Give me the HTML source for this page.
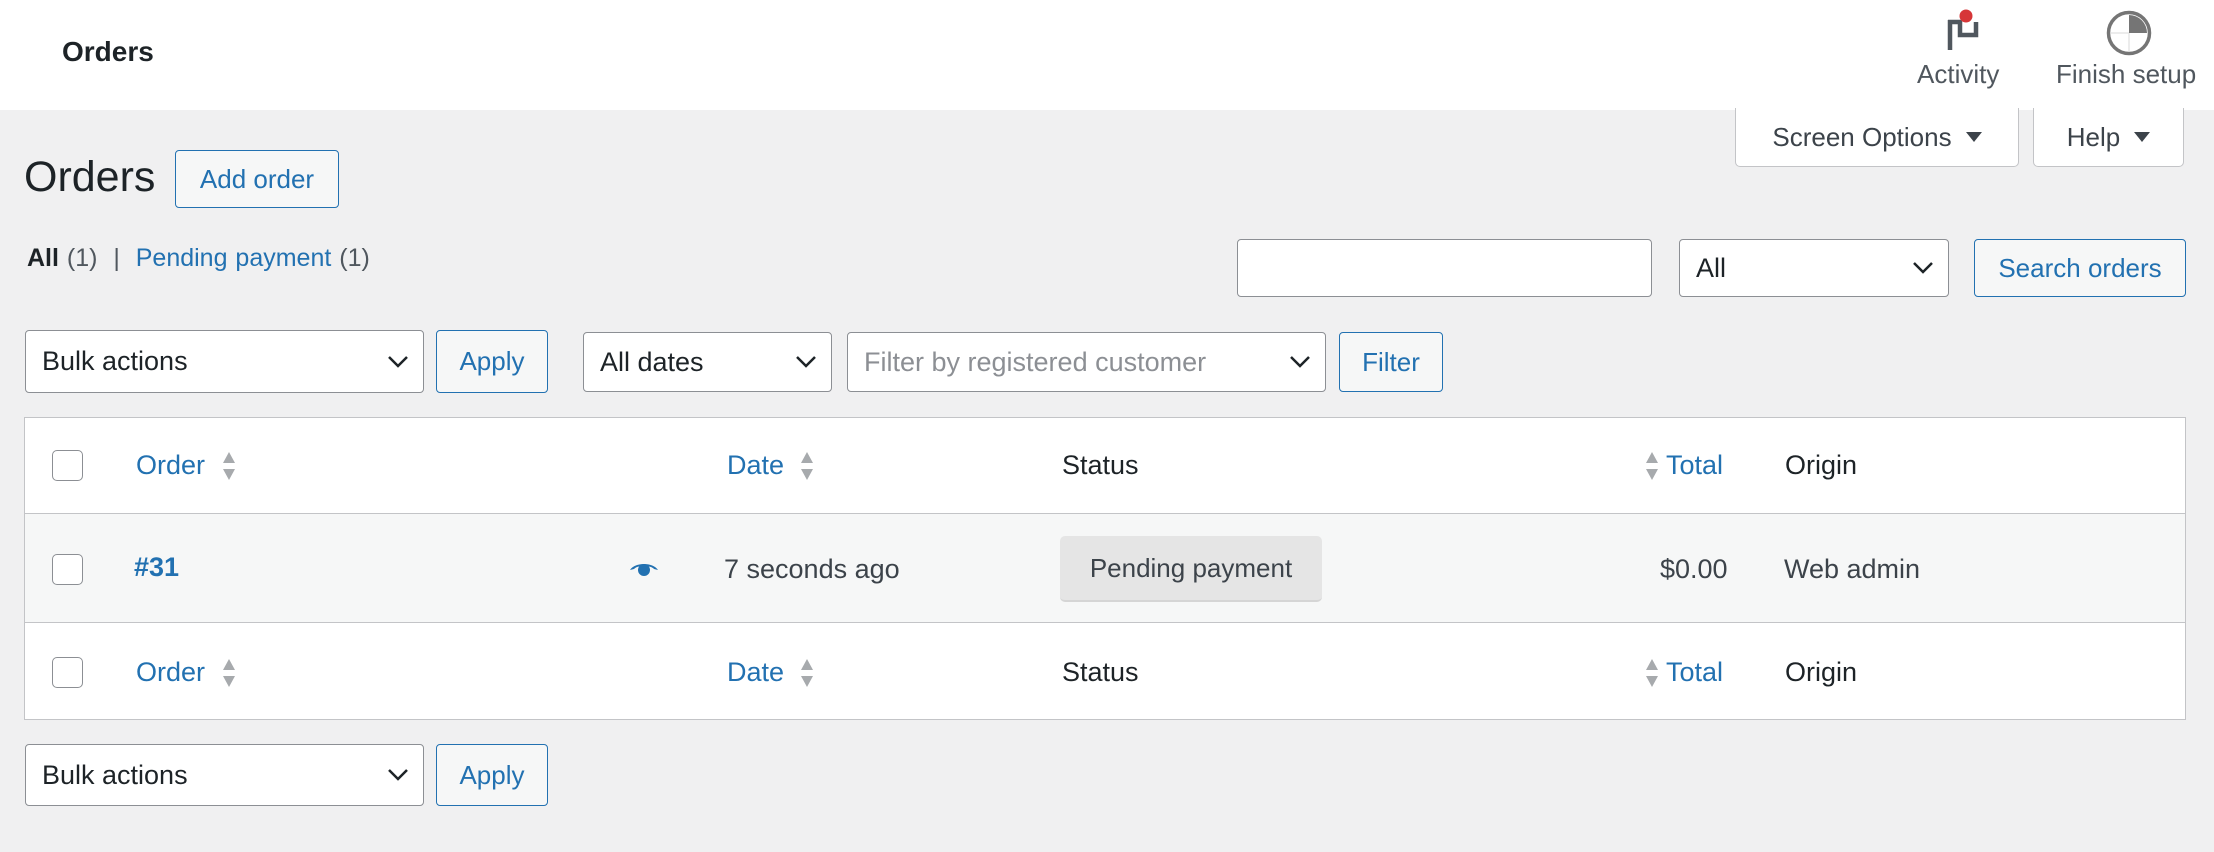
<!DOCTYPE html>
<html><head><meta charset="utf-8"><style>
*{box-sizing:border-box;margin:0;padding:0}
body{width:2214px;height:852px;background:#f0f0f1;font-family:"Liberation Sans",Arial,sans-serif;color:#1d2327;position:relative;overflow:hidden}
.a{position:absolute}
.top{left:0;top:0;width:2214px;height:110px;background:#fff}
.btn{position:absolute;border:1.5px solid #2271b1;border-radius:4px;background:#f6f7f7;color:#2271b1;font-size:26px;display:flex;align-items:center;justify-content:center}
.sel{position:absolute;border:1.5px solid #8c8f94;border-radius:4px;background:#fff;font-size:27px;display:flex;align-items:center;padding-left:16px;color:#1d2327}
.sel svg{position:absolute;right:14px;top:50%;margin-top:-7px}
.tab{position:absolute;top:108px;height:59px;background:#fff;border:1.5px solid #c3c4c7;border-top:none;border-radius:0 0 5px 5px;font-size:26px;color:#3c434a;display:flex;align-items:center;justify-content:center}
.tri{display:inline-block;width:0;height:0;border-left:8px solid transparent;border-right:8px solid transparent;border-top:10px solid #3c434a;margin-left:14px}
.cb{position:absolute;left:52px;width:31px;height:31px;border:1.5px solid #8c8f94;border-radius:5px;background:#fff}
.t{position:absolute;font-size:27px}
.lnk{color:#2271b1}
.arr{position:absolute;width:14px;height:30px}
</style></head><body>
<div class="a top"></div>
<div class="a" style="left:62px;top:36px;font-size:28px;font-weight:bold">Orders</div>
<svg class="a" style="left:1940px;top:6px" width="44" height="46" viewBox="0 0 44 46"><path d="M10 14v30M8 16h12v13h16V16" fill="none" stroke="#50575e" stroke-width="4.5"/><circle cx="26" cy="10" r="6.5" fill="#d63638"/></svg>
<div class="a" style="left:1917px;top:59px;font-size:26px;color:#50575e">Activity</div>
<svg class="a" style="left:2106px;top:10px" width="46" height="46" viewBox="0 0 46 46"><circle cx="23" cy="23" r="20.5" fill="none" stroke="#757575" stroke-width="3.5"/><path d="M23 23V5A18 18 0 0 1 41 23Z" fill="#757575"/><path d="M23 23V41M5 23H23" stroke="#e6e6e6" stroke-width="1.5"/></svg>
<div class="a" style="left:2056px;top:59px;font-size:26px;color:#50575e">Finish setup</div>
<div class="tab" style="left:1735px;width:284px">Screen Options<span class="tri"></span></div>
<div class="tab" style="left:2033px;width:151px">Help<span class="tri"></span></div>
<div class="a" style="left:24px;top:153px;font-size:43px;color:#1d2327">Orders</div>
<div class="btn" style="left:175px;top:150px;width:164px;height:58px">Add order</div>
<div class="a" style="left:27px;top:244px;font-size:25px;color:#50575e;word-spacing:1px"><b style="color:#1d2327">All</b> (1) &nbsp;| &nbsp;<span class="lnk">Pending payment</span> (1)</div>
<div class="sel" style="left:1237px;top:239px;width:415px;height:58px"></div>
<div class="sel" style="left:1679px;top:239px;width:270px;height:58px">All<svg width="22" height="14" viewBox="0 0 22 14"><path d="M2 2l9 9 9-9" fill="none" stroke="#1d2327" stroke-width="2.5"/></svg></div>
<div class="btn" style="left:1974px;top:239px;width:212px;height:58px">Search orders</div>
<div class="sel" style="left:25px;top:330px;width:399px;height:63px">Bulk actions<svg width="22" height="14" viewBox="0 0 22 14"><path d="M2 2l9 9 9-9" fill="none" stroke="#1d2327" stroke-width="2.5"/></svg></div>
<div class="btn" style="left:436px;top:330px;width:112px;height:63px">Apply</div>
<div class="sel" style="left:583px;top:332px;width:249px;height:60px">All dates<svg width="22" height="14" viewBox="0 0 22 14"><path d="M2 2l9 9 9-9" fill="none" stroke="#1d2327" stroke-width="2.5"/></svg></div>
<div class="sel" style="left:847px;top:332px;width:479px;height:60px;color:#8c8f94">Filter by registered customer<svg width="22" height="14" viewBox="0 0 22 14"><path d="M2 2l9 9 9-9" fill="none" stroke="#1d2327" stroke-width="2.5"/></svg></div>
<div class="btn" style="left:1339px;top:332px;width:104px;height:60px">Filter</div>
<div class="a" style="left:24px;top:417px;width:2162px;height:303px;background:#fff;border:1.5px solid #c3c4c7"></div>
<div class="a" style="left:25px;top:513px;width:2160px;height:110px;background:#f6f7f7;border-top:1.5px solid #c3c4c7;border-bottom:1.5px solid #c3c4c7"></div>
<!-- header row -->
<div class="cb" style="top:450px"></div>
<div class="t lnk" style="left:136px;top:450px">Order</div>
<svg class="arr" style="left:222px;top:451px" viewBox="0 0 14 30"><path d="M7 1l6 11H1z M7 29l6-11H1z" fill="#a7aaad"/></svg>
<div class="t lnk" style="left:727px;top:450px">Date</div>
<svg class="arr" style="left:800px;top:451px" viewBox="0 0 14 30"><path d="M7 1l6 11H1z M7 29l6-11H1z" fill="#a7aaad"/></svg>
<div class="t" style="left:1062px;top:450px">Status</div>
<svg class="arr" style="left:1645px;top:451px" viewBox="0 0 14 30"><path d="M7 1l6 11H1z M7 29l6-11H1z" fill="#a7aaad"/></svg>
<div class="t lnk" style="left:1666px;top:450px">Total</div>
<div class="t" style="left:1785px;top:450px">Origin</div>
<!-- data row -->
<div class="cb" style="top:554px"></div>
<div class="t lnk" style="left:134px;top:552px;font-weight:bold">#31</div>
<svg class="a" style="left:629px;top:560px" width="30" height="20" viewBox="0 0 30 20"><path d="M1 10C6 2 24 2 29 10L25 9C22 5 8 5 5 9Z" fill="#2271b1"/><circle cx="15" cy="10" r="6" fill="#2271b1"/></svg>
<div class="t" style="left:724px;top:554px;color:#3c434a">7 seconds ago</div>
<div class="a" style="left:1060px;top:536px;width:262px;height:66px;background:#e5e5e5;border-radius:5px;border-bottom:2px solid #d5d5d5;font-size:26px;color:#3c434a;display:flex;align-items:center;justify-content:center">Pending payment</div>
<div class="t" style="left:1660px;top:554px;color:#3c434a">$0.00</div>
<div class="t" style="left:1784px;top:554px;color:#3c434a">Web admin</div>
<!-- footer row -->
<div class="cb" style="top:657px"></div>
<div class="t lnk" style="left:136px;top:657px">Order</div>
<svg class="arr" style="left:222px;top:658px" viewBox="0 0 14 30"><path d="M7 1l6 11H1z M7 29l6-11H1z" fill="#a7aaad"/></svg>
<div class="t lnk" style="left:727px;top:657px">Date</div>
<svg class="arr" style="left:800px;top:658px" viewBox="0 0 14 30"><path d="M7 1l6 11H1z M7 29l6-11H1z" fill="#a7aaad"/></svg>
<div class="t" style="left:1062px;top:657px">Status</div>
<svg class="arr" style="left:1645px;top:658px" viewBox="0 0 14 30"><path d="M7 1l6 11H1z M7 29l6-11H1z" fill="#a7aaad"/></svg>
<div class="t lnk" style="left:1666px;top:657px">Total</div>
<div class="t" style="left:1785px;top:657px">Origin</div>
<div class="sel" style="left:25px;top:744px;width:399px;height:62px">Bulk actions<svg width="22" height="14" viewBox="0 0 22 14"><path d="M2 2l9 9 9-9" fill="none" stroke="#1d2327" stroke-width="2.5"/></svg></div>
<div class="btn" style="left:436px;top:744px;width:112px;height:62px">Apply</div>
</body></html>
